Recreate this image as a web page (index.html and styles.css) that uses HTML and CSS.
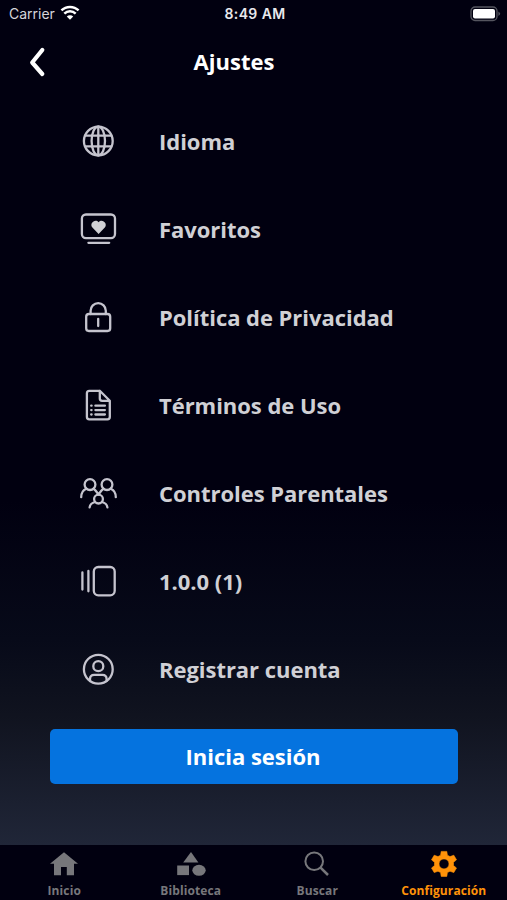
FILE: index.html
```
<!DOCTYPE html>
<html lang="es">
<head>
    <meta charset="UTF-8">
    <meta name="viewport" content="width=device-width, initial-scale=1.0">
    <title>Ajustes</title>
    <link rel="stylesheet" href="styles.css">
</head>
<body>
    <div class="screen">
        <div class="status-bar">
            <div class="carrier">
                <span>Carrier</span>
                <svg class="wifi" width="20" height="15" viewBox="0 0 18 14">
                    <path d="M1 5.1A11.4 11.4 0 0 1 17 5.1" />
                    <path d="M3.7 8A7.6 7.6 0 0 1 14.3 8" />
                    <path class="dot" d="M9 13.8L6 10.8A4.3 4.3 0 0 1 12 10.8Z" />
                </svg>
            </div>
            <div class="clock">8:49 AM</div>
            <div class="battery">
                <svg width="31" height="16" viewBox="0 0 31 16">
                    <rect x="1" y="1" width="26" height="13.5" rx="4" fill="none" stroke="#55555f" stroke-width="1.3" />
                    <rect x="3" y="3" width="22" height="9.5" rx="2" fill="#fff" />
                    <path d="M28.4 5.5Q32 7.8 28.4 10Z" fill="#55555f" />
                </svg>
            </div>
        </div>

        <div class="header">
            <svg class="back" width="20" height="32" viewBox="0 0 20 32">
                <path d="M15.3 4L5.2 16.5L15.3 28" />
            </svg>
            <h1>Ajustes</h1>
        </div>

        <ul class="menu">
            <li>
                <svg viewBox="0 0 40 40">
                    <circle cx="20.3" cy="20" r="14.4" />
                    <ellipse cx="20.3" cy="20" rx="6.7" ry="14.4" />
                    <path d="M20.3 5.6V34.4M7.5 14.7H33.1M7.5 25.3H33.1" />
                </svg>
                <span>Idioma</span>
            </li>
            <li>
                <svg viewBox="0 0 40 40">
                    <rect x="3.9" y="5.5" width="33.1" height="23.6" rx="4" />
                    <path d="M10.4 33.8H31.2" />
                    <path class="filled" d="M20.6 25L14.4 18.6C11 14.8 16.9 9.2 20.6 13.2C24.3 9.2 30.2 14.8 26.8 18.6Z" />
                </svg>
                <span>Favoritos</span>
            </li>
            <li>
                <svg viewBox="0 0 40 40">
                    <rect x="8.2" y="17" width="24" height="17" rx="2.7" />
                    <path d="M12.6 17V13.8A7.6 7.6 0 0 1 27.8 13.8V17M20.2 21.8V29" />
                </svg>
                <span>Política de Privacidad</span>
            </li>
            <li>
                <svg viewBox="0 0 40 40">
                    <path d="M21.8 5.8H11.3Q8.9 5.8 8.9 8.2V32Q8.9 34.3 11.3 34.3H29.5Q31.8 34.3 31.8 32V15.8L21.8 5.8V13.5Q21.8 15.8 24.1 15.8H31.8" />
                    <path d="M17.4 20.7H26.9M17.4 25.1H26.9M17.4 29.5H26.9" />
                    <path d="M13.2 20.7H13.6M13.2 25.1H13.6M13.2 29.5H13.6" />
                </svg>
                <span>Términos de Uso</span>
            </li>
            <li>
                <svg viewBox="0 0 40 40">
                    <circle cx="12" cy="11.6" r="5.4" />
                    <circle cx="29" cy="11.6" r="5.4" />
                    <circle cx="20.5" cy="26.1" r="4.4" />
                    <path d="M3.2 24.2C3.2 20 5.2 17.2 8.2 15.8M15.6 15.8C17.8 17.2 18.8 19 20.5 21.5C22.2 19 23.2 17.2 25.4 15.8M32.8 15.8C35.8 17.2 37.8 20 37.8 24.2" />
                    <path d="M11.6 34.4C12 31.7 14 29.7 17 29M24 29C27 29.7 29 31.7 29.4 34.4" />
                </svg>
                <span>Controles Parentales</span>
            </li>
            <li>
                <svg viewBox="0 0 40 40">
                    <rect x="15.8" y="6" width="20.9" height="28.3" rx="4.5" />
                    <path d="M4.4 11.5V28.5M10.4 10V30.3" />
                </svg>
                <span>1.0.0 (1)</span>
            </li>
            <li>
                <svg viewBox="0 0 40 40">
                    <circle cx="20.3" cy="20.2" r="14.4" />
                    <circle cx="20.3" cy="17.2" r="5" />
                    <path d="M12 32V30.2Q12 25.8 16.2 25.8H24.4Q28.6 25.8 28.6 30.2V32" />
                </svg>
                <span>Registrar cuenta</span>
            </li>
        </ul>

        <button class="login-btn">Inicia sesión</button>

        <nav class="tab-bar">
            <a class="tab">
                <svg viewBox="0 0 32 28">
                    <path d="M16 2.3L30 13.8H26V25.3H18.8V17H13V25.3H6V13.8H2Z" />
                </svg>
                <span>Inicio</span>
            </a>
            <a class="tab">
                <svg viewBox="0 0 32 28">
                    <path d="M16 2L23.4 12.4H8.2Z" />
                    <rect x="2.2" y="15.5" width="11.8" height="9.6" />
                    <ellipse cx="24" cy="20.3" rx="6.7" ry="5.5" />
                </svg>
                <span>Biblioteca</span>
            </a>
            <a class="tab">
                <svg viewBox="0 0 32 28">
                    <g fill="none" stroke="currentColor" stroke-width="2">
                        <circle cx="13.2" cy="11.2" r="8.8" />
                        <path d="M19.3 17.3L27 25" stroke-width="2.5" />
                    </g>
                </svg>
                <span>Buscar</span>
            </a>
            <a class="tab active">
                <svg viewBox="0 0 32 28">
                    <path fill-rule="evenodd" d="M13.2 1.4H18.8L19.4 5.2L22 6.6L25.8 5.2L28.5 9.8L25.5 12.3V15.5L28.5 18L25.8 22.6L22 21.2L19.4 22.6L18.8 26.4H13.2L12.6 22.6L10 21.2L6.2 22.6L3.5 18L6.5 15.5V12.3L3.5 9.8L6.2 5.2L10 6.6L12.6 5.2ZM16 8.9A5 5 0 1 0 16 18.9A5 5 0 1 0 16 8.9Z" stroke="currentColor" stroke-width="0.6" stroke-linejoin="round" />
                </svg>
                <span>Configuración</span>
            </a>
        </nav>
    </div>
</body>
</html>
```
FILE: styles.css
```
* {
    margin: 0;
    padding: 0;
    box-sizing: border-box;
}

body {
    font-family: 'Open Sans', sans-serif;
    background: #010010;
    color: #fff;
}

.screen {
    display: flex;
    flex-direction: column;
    width: 507px;
    height: 900px;
    overflow: hidden;
    background: linear-gradient(180deg, #010010 0, #010010 500px, #070a19 640px, #10131f 715px, #202638 845px);
}

.status-bar {
    display: grid;
    grid-template-columns: 1fr auto 1fr;
    align-items: center;
    height: 27px;
    padding: 0 6px 0 9px;
    font-family: Inter, sans-serif;
    font-size: 14px;
}

.carrier {
    display: flex;
    align-items: center;
    gap: 5px;
    color: #d5d5da;
}

.wifi {
    fill: none;
    stroke: #fff;
    stroke-width: 2.3;
    margin-top: -2px;
}

.wifi .dot {
    fill: #fff;
    stroke: none;
}

.clock {
    color: #e8e8ec;
    font-weight: 600;
    letter-spacing: 0.4px;
}

.battery {
    display: flex;
    justify-content: flex-end;
}

.header {
    display: grid;
    grid-template-columns: 40px 1fr 80px;
    align-items: center;
    height: 70px;
    padding-left: 27px;
}

.back {
    fill: none;
    stroke: #fff;
    stroke-width: 4.2;
    stroke-linecap: round;
    stroke-linejoin: round;
}

.header h1 {
    font-size: 22px;
    font-weight: 700;
    text-align: center;
    padding: 0 26px 2px 0;
}

.menu {
    list-style: none;
    padding-left: 78px;
}

.menu li {
    display: flex;
    align-items: center;
    gap: 41px;
    height: 88px;
    color: #d0d0d5;
    font-size: 22px;
    font-weight: 700;
    letter-spacing: -0.04px;
}

.menu span {
    padding-bottom: 1px;
}

.menu svg {
    width: 40px;
    height: 40px;
    fill: none;
    stroke: #c5c4ce;
    stroke-width: 2.3;
    stroke-linecap: round;
    stroke-linejoin: round;
}

.menu .filled {
    fill: #d0d0d5;
    stroke: none;
}

.login-btn {
    height: 55px;
    margin: 16px 49px 0 50px;
    padding: 0 2px 2px 0;
    border: none;
    border-radius: 5px;
    background: #0573df;
    color: #fff;
    font: 700 22px 'Open Sans', sans-serif;
}

.tab-bar {
    display: flex;
    height: 55px;
    margin-top: auto;
    padding-left: 1px;
    background: #010010;
}

.tab {
    display: flex;
    flex: 1;
    flex-direction: column;
    align-items: center;
    padding-top: 5px;
    color: #77777b;
    font-size: 12px;
    font-weight: 700;
    line-height: 16px;
    letter-spacing: 0.1px;
}

.tab svg {
    width: 32px;
    height: 28px;
    margin-bottom: 5px;
    fill: currentColor;
}

.tab.active {
    color: #ff9209;
}
```
